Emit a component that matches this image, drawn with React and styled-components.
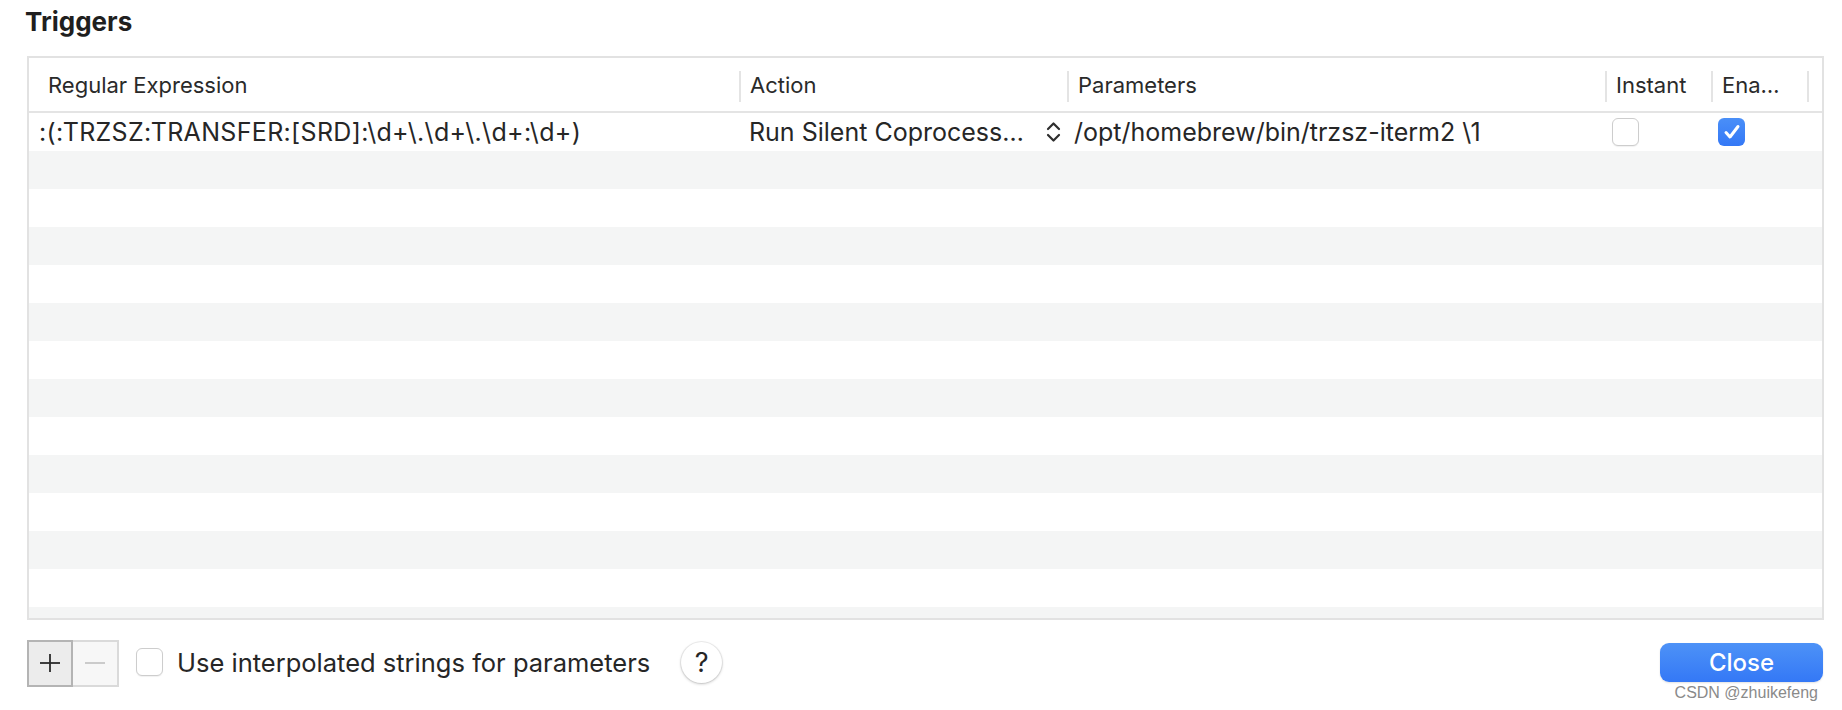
import React from 'react';
import styled, { createGlobalStyle } from 'styled-components';

const GlobalStyle = createGlobalStyle`
  html, body {
    margin: 0;
    padding: 0;
    background: #ffffff;
  }
  body {
    font-family: Inter, "Liberation Sans", Arial, sans-serif;
    color: #262626;
  }
`;

const Page = styled.div`
  position: relative;
  width: 1842px;
  height: 710px;
  box-sizing: border-box;
  padding: 0 18px 0 27px;
  display: flex;
  flex-direction: column;
  overflow: hidden;
`;

const Title = styled.h2`
  margin: 0;
  height: 56px;
  display: flex;
  align-items: flex-start;
  padding-top: 6px;
  box-sizing: border-box;
  font-size: 26px;
  font-weight: 700;
  color: #1f1f1f;
  margin-left: -2px;
`;

const Table = styled.div`
  height: 564px;
  box-sizing: border-box;
  border: 2px solid #e2e2e2;
  display: flex;
  flex-direction: column;
  overflow: hidden;
`;

const cols = '710px 328px 538px 106px 96px 1fr';

const HeaderRow = styled.div`
  display: grid;
  grid-template-columns: ${cols};
  height: 53px;
  border-bottom: 2px solid #e4e4e4;
  flex: none;
`;

const HeadCell = styled.div`
  position: relative;
  display: flex;
  align-items: center;
  padding-left: ${p => (p.$first ? '19px' : '11px')};
  font-size: 22px;
  color: #2a2a2a;
  white-space: nowrap;
  overflow: hidden;

  &::before {
    content: '';
    display: ${p => (p.$first ? 'none' : 'block')};
    position: absolute;
    left: 0;
    top: 13px;
    bottom: 9px;
    width: 2px;
    background: #e4e4e4;
  }
`;

const Body = styled.div`
  flex: 1;
  overflow: hidden;
`;

const Row = styled.div`
  display: grid;
  grid-template-columns: ${cols};
  height: 38px;
  background: ${p => (p.$striped ? '#f4f5f5' : '#ffffff')};
`;

const Cell = styled.div`
  display: flex;
  align-items: center;
  padding-left: ${p => p.$pad || '7px'};
  padding-right: ${p => p.$padRight || '0'};
  font-size: 25px;
  letter-spacing: ${p => p.$spacing || 'normal'};
  color: #262626;
  white-space: nowrap;
  overflow: hidden;
  justify-content: ${p => (p.$spread ? 'space-between' : 'flex-start')};
`;

const Check = styled.span`
  width: 27px;
  height: 28px;
  box-sizing: border-box;
  border-radius: 6px;
  flex: none;
  display: inline-flex;
  align-items: center;
  justify-content: center;
  background: ${p => (p.$on ? 'linear-gradient(#4a8ff8, #3478f6)' : '#ffffff')};
  border: ${p => (p.$on ? 'none' : '1.5px solid #cdcdcd')};
  box-shadow: ${p => (p.$on ? 'none' : '0 1px 1px rgba(0,0,0,0.06)')};
`;

const Footer = styled.div`
  flex: 1;
  display: flex;
  align-items: center;
  padding-bottom: 6px;
  margin-right: 1px;
`;

const Segmented = styled.div`
  display: flex;
  height: 47px;
  margin-top: 2px;
`;

const SegButton = styled.div`
  width: 46px;
  box-sizing: border-box;
  display: flex;
  align-items: center;
  justify-content: center;
  background: ${p => (p.$active ? '#ececec' : '#f7f7f7')};
  border: 2px solid ${p => (p.$active ? '#b4b4b4' : '#dadada')};
  border-left: ${p => (p.$active ? '2px solid #b4b4b4' : 'none')};
`;

const Label = styled.label`
  display: flex;
  align-items: center;
  gap: 14px;
  margin-left: 17px;
  font-size: 25.5px;
  color: #262626;
`;

const Help = styled.div`
  width: 41px;
  height: 41px;
  margin-left: 31px;
  border-radius: 50%;
  background: #ffffff;
  box-shadow: 0 0 0 1px rgba(0,0,0,0.06), 0 1px 3px rgba(0,0,0,0.22);
  display: flex;
  align-items: center;
  justify-content: center;
  font-size: 27px;
  color: #262626;
`;

const CloseButton = styled.button`
  margin-left: auto;
  width: 163px;
  height: 39px;
  border: none;
  border-radius: 9px;
  background: linear-gradient(#4d92f7, #3478f6);
  color: #ffffff;
  font-family: inherit;
  font-size: 24px;
  font-weight: 500;
  box-shadow: 0 1px 2px rgba(0,0,0,0.12);
`;

const Watermark = styled.div`
  position: absolute;
  right: 24px;
  top: 684px;
  font-family: "Liberation Sans", Arial, sans-serif;
  font-size: 16px;
  color: #8a8a8a;
  white-space: nowrap;
`;

const Chevrons = () => (
  <svg width="17" height="22" viewBox="0 0 17 22" fill="none">
    <polyline points="3,8 8.5,2.5 14,8" stroke="#2e2e2e" strokeWidth="2.2" strokeLinecap="round" strokeLinejoin="round" />
    <polyline points="3,14 8.5,19.5 14,14" stroke="#2e2e2e" strokeWidth="2.2" strokeLinecap="round" strokeLinejoin="round" />
  </svg>
);

const Tick = () => (
  <svg width="18" height="16" viewBox="0 0 18 16" fill="none">
    <polyline points="3,8.5 7,13 15,2.5" stroke="#ffffff" strokeWidth="3" strokeLinecap="round" strokeLinejoin="round" />
  </svg>
);

const PlusIcon = () => (
  <svg width="22" height="20" viewBox="0 0 22 20">
    <line x1="1" y1="10" x2="21" y2="10" stroke="#2b2b2b" strokeWidth="1.8" />
    <line x1="11" y1="1" x2="11" y2="19" stroke="#2b2b2b" strokeWidth="1.8" />
  </svg>
);

const MinusIcon = () => (
  <svg width="22" height="4" viewBox="0 0 22 4">
    <line x1="1" y1="2" x2="21" y2="2" stroke="#c6c6c6" strokeWidth="1.8" />
  </svg>
);

const emptyRows = Array.from({ length: 13 }, (_, i) => i + 1);

export default function App() {
  return (
    <>
      <GlobalStyle />
      <Page>
        <Title>Triggers</Title>
        <Table>
          <HeaderRow>
            <HeadCell $first>Regular Expression</HeadCell>
            <HeadCell>Action</HeadCell>
            <HeadCell>Parameters</HeadCell>
            <HeadCell>Instant</HeadCell>
            <HeadCell>Ena…</HeadCell>
            <HeadCell />
          </HeaderRow>
          <Body>
            <Row>
              <Cell $pad="10px" $spacing="0.33px">:(:TRZSZ:TRANSFER:[SRD]:\d+\.\d+\.\d+:\d+)</Cell>
              <Cell $pad="10px" $padRight="5px" $spread>
                <span>Run Silent Coprocess…</span>
                <Chevrons />
              </Cell>
              <Cell>/opt/homebrew/bin/trzsz-iterm2 \1</Cell>
              <Cell><Check /></Cell>
              <Cell><Check $on><Tick /></Check></Cell>
              <Cell />
            </Row>
            {emptyRows.map(i => (
              <Row key={i} $striped={i % 2 === 1}>
                <Cell /><Cell /><Cell /><Cell /><Cell /><Cell />
              </Row>
            ))}
          </Body>
        </Table>
        <Footer>
          <Segmented>
            <SegButton $active><PlusIcon /></SegButton>
            <SegButton><MinusIcon /></SegButton>
          </Segmented>
          <Label>
            <Check />
            Use interpolated strings for parameters
          </Label>
          <Help>?</Help>
          <CloseButton>Close</CloseButton>
        </Footer>
        <Watermark>CSDN @zhuikefeng</Watermark>
      </Page>
    </>
  );
}
